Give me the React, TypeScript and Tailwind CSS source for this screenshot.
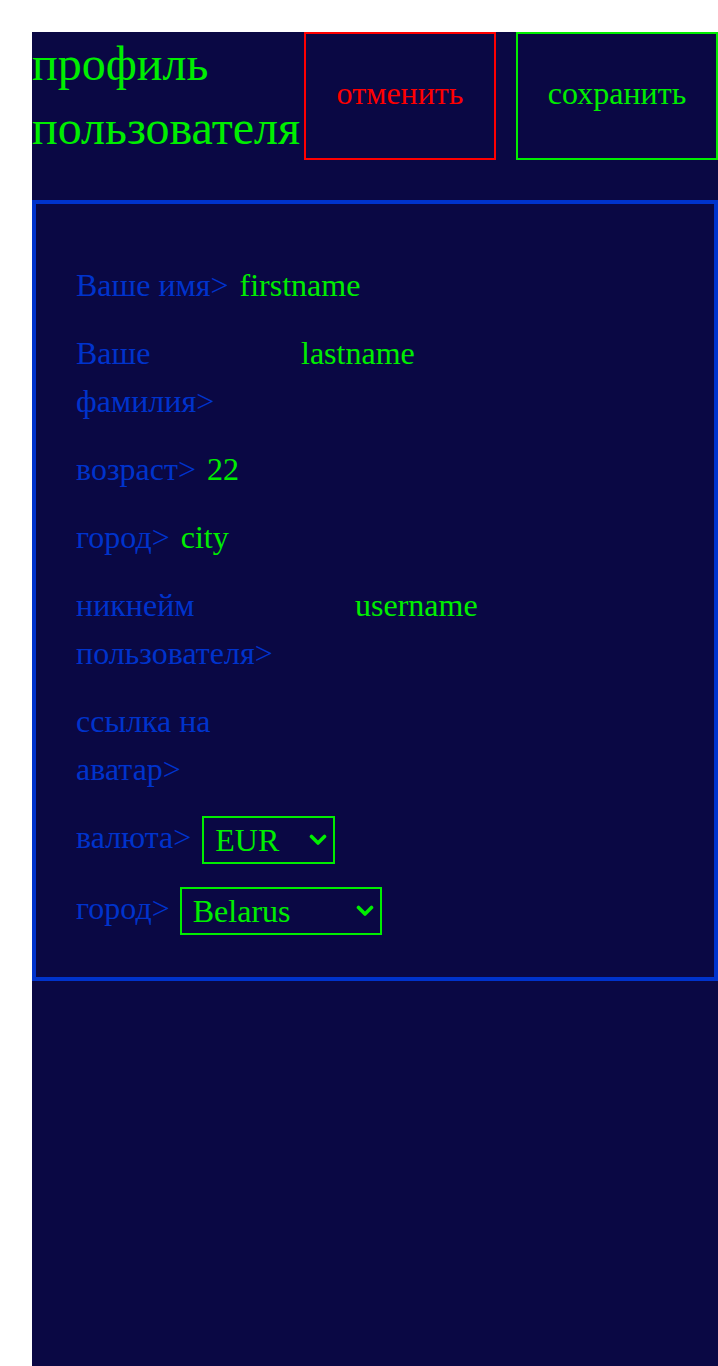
import { useState } from "react";

// profile page: header with title + buttons, then the form card
type Field = {
  label: string;
  value: string;
  labelWidth?: string;
};

const fields: Field[] = [
  { label: "Ваше имя>", value: "firstname" },
  { label: "Ваше фамилия>", value: "lastname", labelWidth: "w-[214px]" },
  { label: "возраст>", value: "22" },
  { label: "город>", value: "city" },
  { label: "никнейм пользователя>", value: "username", labelWidth: "w-[268px]" },
  { label: "ссылка на аватар>", value: "", labelWidth: "w-[150px]" },
];

function Chevron() {
  return (
    <svg width="18" height="12" viewBox="0 0 18 12" fill="none" className="pointer-events-none">
      <polyline points="2.5,2.5 9,9 15.5,2.5" stroke="#00ee00" strokeWidth="3.6" strokeLinecap="round" strokeLinejoin="round" />
    </svg>
  );
}

function Select({ value, options, width, onChange }: { value: string; options: string[]; width: string; onChange: (v: string) => void }) {
  return (
    <div className={`relative mt-[3px] h-[48px] ${width}`}>
      <select
        value={value}
        onChange={(e) => onChange(e.target.value)}
        className="h-full w-full appearance-none border-2 border-[#00ee00] bg-[#0a0844] pl-[11px] text-[32px] leading-[40px] text-[#00ee00] outline-none font-['Liberation_Serif',serif]"
      >
        {options.map((o) => (
          <option key={o} value={o}>
            {o}
          </option>
        ))}
      </select>
      <div className="absolute right-[8px] top-[18px] flex">
        <Chevron />
      </div>
    </div>
  );
}

export default function App() {
  const [currency, setCurrency] = useState("EUR");
  const [country, setCountry] = useState("Belarus");

  return (
    <div className="min-h-screen bg-white pl-8 pt-8 font-['Liberation_Serif',serif]">
      <div className="w-[686px] min-h-[1334px] bg-[#0a0844]">
        <div className="flex items-start">
          <h1 className="w-[272px] text-[48px] leading-[64px] text-[#00ee00]">профиль пользователя</h1>
          <button className="flex h-[128px] w-[192px] items-center justify-center border-2 border-[#ff0000] pb-[6px] text-[32px] text-[#ff0000]">
            отменить
          </button>
          <button className="ml-5 flex h-[128px] w-[202px] items-center justify-center border-2 border-[#00ee00] pb-[6px] text-[32px] text-[#00ee00]">
            сохранить
          </button>
        </div>

        <div className="mt-10 flex flex-col gap-5 border-4 border-[#0033cc] px-10 pt-[57px] pb-[42px] text-[32px] leading-[48px]">
          {fields.map((f) => (
            <div key={f.label} className="flex items-start gap-[11px]">
              <span className={`text-[#0033cc] ${f.labelWidth ?? ""}`}>{f.label}</span>
              {f.value && <span className="text-[#00ee00]">{f.value}</span>}
            </div>
          ))}
          <div className="flex items-start gap-[11px]">
            <span className="text-[#0033cc]">валюта&gt;</span>
            <Select value={currency} options={["EUR", "USD", "RUB"]} width="w-[133px]" onChange={setCurrency} />
          </div>
          <div className="flex items-start gap-[10px]">
            <span className="text-[#0033cc]">город&gt;</span>
            <Select value={country} options={["Belarus", "Russia", "Ukraine"]} width="w-[202px]" onChange={setCountry} />
          </div>
        </div>
      </div>
    </div>
  );
}
